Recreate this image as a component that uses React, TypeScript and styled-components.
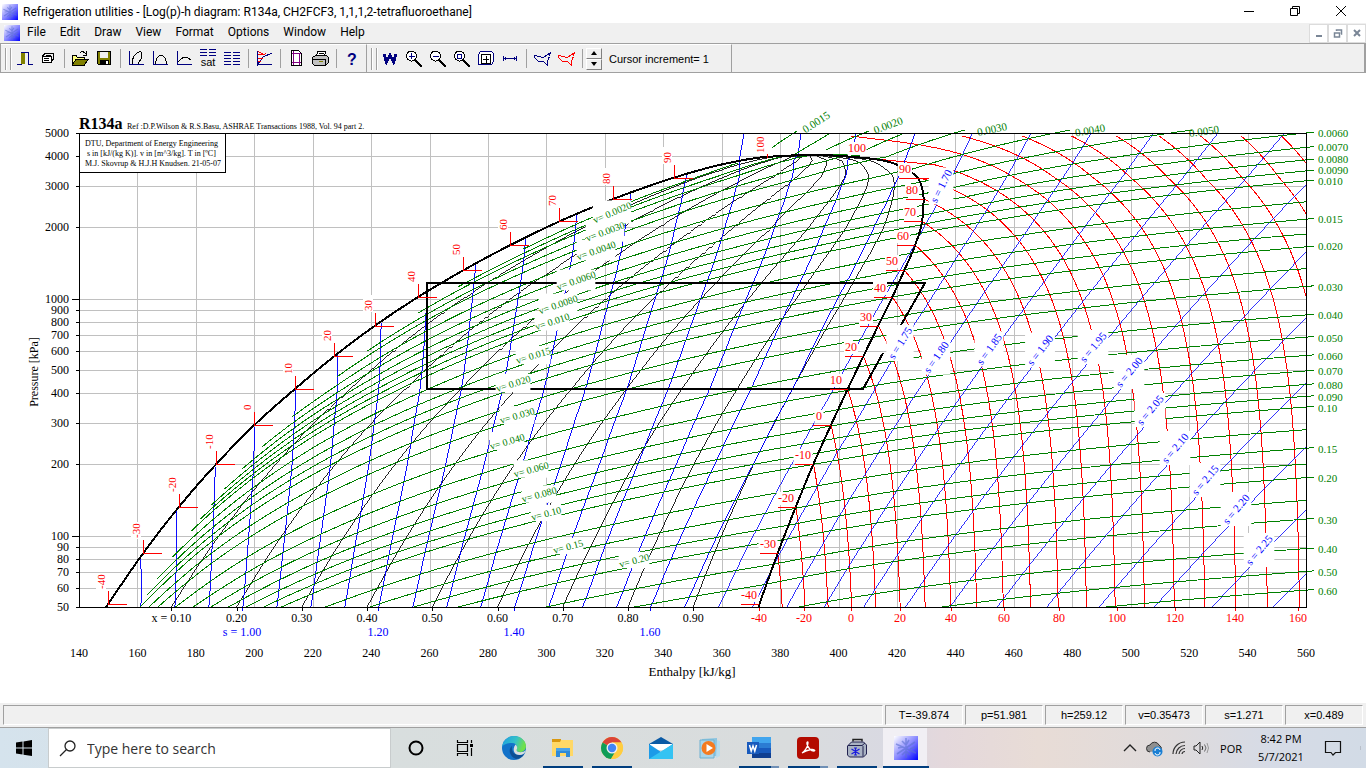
import React from "react";
import styled, { createGlobalStyle } from "styled-components";

/* ------------------------------------------------------------------ */
/* Refrigerant properties                                              */
/* ------------------------------------------------------------------ */

// T [C], p [kPa], h', h'' [kJ/kg], s' [kJ/(kg K)], v', v'' [m3/kg]
const SATURATION = [
  [-42, 46.3, 147.5, 371.7, 0.791, 0.000702, 0.4],
  [-40, 51.3, 149.9, 372.9, 0.8015, 0.000705, 0.361],
  [-30, 84.4, 162.0, 379.2, 0.8535, 0.00072, 0.226],
  [-20, 132.7, 174.3, 385.4, 0.903, 0.000736, 0.1474],
  [-10, 200.6, 187.0, 391.4, 0.9515, 0.000753, 0.0996],
  [0, 292.8, 200.0, 397.4, 1.0, 0.000772, 0.0693],
  [10, 414.6, 213.8, 403.1, 1.0485, 0.000793, 0.04944],
  [20, 571.7, 227.4, 408.5, 1.0962, 0.000817, 0.036],
  [30, 770.2, 241.4, 413.6, 1.1435, 0.000842, 0.02664],
  [40, 1016.6, 256.1, 418.4, 1.1905, 0.000872, 0.01997],
  [50, 1317.9, 271.6, 422.5, 1.2375, 0.000908, 0.01509],
  [60, 1681.8, 287.6, 426.2, 1.2848, 0.00095, 0.01144],
  [70, 2116.8, 304.4, 428.6, 1.3332, 0.001004, 0.00865],
  [80, 2633.2, 322.9, 429.1, 1.3836, 0.001077, 0.00644],
  [85, 2926, 333.0, 428.6, 1.411, 0.00113, 0.0055],
  [90, 3244.2, 343.8, 427.0, 1.439, 0.001194, 0.00461],
  [95, 3591, 356.3, 421.7, 1.473, 0.00131, 0.0038],
  [98, 3815, 366.0, 416.0, 1.5, 0.00143, 0.00322],
  [100, 3972.4, 375.5, 404.6, 1.523, 0.00156, 0.00265],
  [101.06, 4059, 392.0, 392.0, 1.565, 0.00195, 0.00195],
];

// Shape preserving cubic interpolation
function spline(xs: number[], ys: number[]) {
  const n = xs.length;
  const d: number[] = [];
  for (let i = 0; i < n - 1; i++) d.push((ys[i + 1] - ys[i]) / (xs[i + 1] - xs[i]));
  const m: number[] = [d[0]];
  for (let i = 1; i < n - 1; i++)
    m.push(d[i - 1] * d[i] <= 0 ? 0 : (2 * d[i - 1] * d[i]) / (d[i - 1] + d[i]));
  m.push(d[n - 2]);
  return (x: number) => {
    let i = 0;
    while (i < n - 2 && x > xs[i + 1]) i++;
    const w = xs[i + 1] - xs[i];
    const t = (x - xs[i]) / w;
    const t2 = t * t;
    const t3 = t2 * t;
    return (
      (2 * t3 - 3 * t2 + 1) * ys[i] +
      (t3 - 2 * t2 + t) * w * m[i] +
      (3 * t2 - 2 * t3) * ys[i + 1] +
      (t3 - t2) * w * m[i + 1]
    );
  };
}

const col = (i: number) => SATURATION.map((r) => r[i]);
const lnP = col(1).map(Math.log);
const byP = (i: number) => {
  const f = spline(lnP, col(i));
  return (p: number) => f(Math.log(p));
};
const tSat = byP(0);
const hf = byP(2);
const hg = byP(3);
const sf = byP(4);
const vf = byP(5);
const lnVg = spline(lnP, col(6).map(Math.log));
const vg = (p: number) => Math.exp(lnVg(Math.log(p)));
const sg = (p: number) => sf(p) + (hg(p) - hf(p)) / (tSat(p) + 273.15);
const lnPs = spline(col(0), lnP);
const pSat = (t: number) => Math.exp(lnPs(t));

const R = 8.314 / 102.03;
const TC = 374.21;
const PC = 4059;
const KAPPA = 0.37464 + 1.54226 * 0.3268 - 0.26992 * 0.3268 * 0.3268;
const B0 = (0.0778 * R * TC) / PC;
const A0 = (0.45724 * R * R * TC * TC) / PC;
const S8 = 2 * Math.SQRT2;

// Peng-Robinson equation of state
function gas(t: number, p: number) {
  const T = t + 273.15;
  const q = 1 + KAPPA * (1 - Math.sqrt(T / TC));
  const a = A0 * q * q;
  const da = (-A0 * q * KAPPA) / Math.sqrt(T * TC);
  const A = (a * p) / (R * R * T * T);
  const B = (B0 * p) / (R * T);
  const c2 = B - 1;
  const c1 = A - 3 * B * B - 2 * B;
  const c0 = -(A * B - B * B - B * B * B);
  const Q = (c2 * c2 - 3 * c1) / 9;
  const U = (2 * c2 * c2 * c2 - 9 * c2 * c1 + 27 * c0) / 54;
  let z: number;
  if (Q > 0 && U * U < Q * Q * Q) {
    const th = Math.acos(U / Math.sqrt(Q * Q * Q));
    z = -2 * Math.sqrt(Q) * Math.cos((th + 2 * Math.PI) / 3) - c2 / 3;
  } else {
    const e = -Math.sign(U) * Math.cbrt(Math.abs(U) + Math.sqrt(U * U - Q * Q * Q));
    z = e + (e === 0 ? 0 : Q / e) - c2 / 3;
  }
  const lg = Math.log((z + 2.41421 * B) / (z - 0.41421 * B));
  return {
    h: 0.796 * t + 0.000975 * t * t + R * T * (z - 1) + ((T * da - a) / (S8 * B0)) * lg,
    s:
      (0.796 - 0.00195 * 273.15) * Math.log(T) +
      0.00195 * T -
      R * Math.log(p) +
      R * Math.log(z - B) +
      (da / (S8 * B0)) * lg,
    v: (z * R * T) / p,
  };
}

const H0 = 456.6 - gas(60, 50).h;
const S0 = 2.1 - gas(75.8, 50).s;

function vapour(t: number, p: number) {
  const g = gas(t, p);
  const tr = Math.min(t, 90);
  const ps = pSat(tr);
  const e = gas(tr, ps);
  const k = Math.min(1, p / ps);
  return {
    h: g.h + H0 + (hg(ps) - e.h - H0) * k,
    s: g.s + S0 + (sg(ps) - e.s - S0) * k,
    v: g.v * (1 + (vg(ps) / e.v - 1) * k),
  };
}

function solve(key: "s" | "v", target: number, p: number) {
  let lo = p < PC ? tSat(p) : 101;
  let hi = 280;
  for (let i = 0; i < 40; i++) {
    const mid = (lo + hi) / 2;
    if (vapour(mid, p)[key] < target) lo = mid;
    else hi = mid;
  }
  return vapour((lo + hi) / 2, p).h;
}

/* ------------------------------------------------------------------ */
/* Chart geometry                                                      */
/* ------------------------------------------------------------------ */

type Pt = [number, number];
const X = (h: number) => 79 + (h - 140) * 2.9214;
const Y = (p: number) => 607 - 237 * Math.log10(p / 50);
const P = (y: number) => 50 * Math.pow(10, (607 - y) / 237);
const pt = (h: number, p: number): Pt => [X(h), Y(p)];
const path = (pts: Pt[]) =>
  pts.map(([x, y], i) => `${i ? "L" : "M"}${x.toFixed(1)} ${y.toFixed(1)}`).join("");

const PRESSURES: number[] = [];
for (let y = 607; y > 155; y -= 2) PRESSURES.push(P(y));
PRESSURES.push(4030, 4055);
const HIGH: number[] = [];
for (let y = 153; y >= 129; y -= 3) HIGH.push(P(y));

const dome = path([
  ...PRESSURES.map((p) => pt(hf(p), p)),
  pt(392, 4059),
  ...PRESSURES.slice().reverse().map((p) => pt(hg(p), p)),
]);

const qualityLine = (x: number) =>
  path([...PRESSURES.map((p) => pt(hf(p) + x * (hg(p) - hf(p)), p)), pt(392, 4059)]);

const TOP_S: Record<string, number> = { "1.5": 744, "1.55": 801, "1.6": 856 };
function isentrope(s: number) {
  const pts: Pt[] = [];
  for (const p of PRESSURES) {
    if (s < sf(p)) break;
    const g = sg(p);
    if (s <= g) pts.push(pt(hf(p) + ((s - sf(p)) / (g - sf(p))) * (hg(p) - hf(p)), p));
    else pts.push([X(solve("s", s, p)), Y(p)]);
  }
  const top = TOP_S[String(s)];
  if (top) pts.push([top, 133]);
  else if (s > 1.62) for (const p of HIGH) pts.push([X(solve("s", s, p)), Y(p)]);
  return path(pts);
}

const TOP_V: Record<string, Pt[]> = {
  "0.0015": [[772, 148], [780, 142], [797, 131]],
  "0.00175": [[795, 154], [829, 134]],
  "0.002": [[826, 150], [847, 140], [869, 131]],
};
function isochore(v: number) {
  const pts: Pt[] = [];
  for (const p of PRESSURES) {
    if (v <= vg(p)) {
      const x = (v - vf(p)) / (vg(p) - vf(p));
      if (x >= 0.05) pts.push(pt(hf(p) + x * (hg(p) - hf(p)), p));
    } else pts.push([X(solve("v", v, p)), Y(p)]);
  }
  const top = TOP_V[String(v)];
  if (top) return path(pts) + path(top);
  for (const p of HIGH) pts.push([X(solve("v", v, p)), Y(p)]);
  return path(pts.filter(([x]) => x < 1500));
}

function isotherm(t: number) {
  const pts: Pt[] = [];
  const yTop = t < 101 ? Y(pSat(t)) : 133;
  if (t < 101) pts.push(pt(hg(pSat(t)), pSat(t)));
  for (let y = yTop + (t === 100 ? 8 : 3); y < 607; y += 3) pts.push([X(vapour(t, P(y)).h), y]);
  pts.push([X(vapour(t, 50).h), 607]);
  return path(pts);
}

const range = (a: number, b: number, step: number) => {
  const out: number[] = [];
  for (let i = 0; a + i * step <= b + step / 100; i++) out.push(Number((a + i * step).toFixed(4)));
  return out;
};

const VOLUMES = [0.001, 0.01, 0.1]
  .flatMap((d) => [1.5, 1.75, 2, 2.5, 3, 4, 5, 6, 7, 8, 9, 10, 12.5].map((m) => Number((m * d).toFixed(6))))
  .filter((v) => v <= 0.6);
// intermediate curves stop at the frame, labelled ones run a little past it
const isMinor = (v: number) => /(125|175|25)$/.test(String(v));

const GRID_P = [50, 60, 70, 80, 90, 100, 200, 300, 400, 500, 600, 700, 800, 900, 1000, 2000, 3000, 4000, 5000];

const RIGHT_V: [string, number][] = [
  ["0.0060", 133], ["0.0070", 147], ["0.0080", 159], ["0.0090", 170], ["0.010", 181],
  ["0.015", 219], ["0.020", 246], ["0.030", 287], ["0.040", 315], ["0.050", 338],
  ["0.060", 356], ["0.070", 371], ["0.080", 385], ["0.090", 397], ["0.10", 408],
  ["0.15", 449], ["0.20", 478], ["0.30", 520], ["0.40", 549], ["0.50", 572], ["0.60", 591],
];

type Tag = [string, number, number, number];
const TOP_TAGS: Tag[] = [
  ["0.0015", 816, 122, -33], ["0.0020", 888, 125, -20], ["0.0030", 992, 129, -12],
  ["0.0040", 1090, 130, -10], ["0.0050", 1204, 131, -8],
];
const V_TAGS: Tag[] = [
  ["v= 0.0020", 612, 212, -23], ["v= 0.0030", 605, 231, -20], ["v= 0.0040", 596, 250, -19],
  ["v= 0.0060", 576, 280, -19], ["v= 0.0080", 558, 304, -19], ["v= 0.010", 552, 321, -18],
  ["v= 0.015", 533, 355, -17], ["v= 0.020", 513, 383, -17], ["v= 0.030", 517, 415, -16],
  ["v= 0.040", 507, 441, -16], ["v= 0.060", 531, 469, -15], ["v= 0.080", 539, 494, -15],
  ["v= 0.10", 546, 513, -15], ["v= 0.15", 568, 546, -15], ["v= 0.20", 634, 560, -15],
];
const S_TAGS: Tag[] = [
  ["s = 1.70", 941, 186, -63], ["s = 1.75", 900, 343, -58], ["s = 1.80", 936, 357, -55],
  ["s = 1.85", 989, 349, -54], ["s = 1.90", 1040, 350, -52], ["s = 1.95", 1093, 347, -50],
  ["s = 2.00", 1129, 372, -50], ["s = 2.05", 1150, 410, -50], ["s = 2.10", 1175, 448, -50],
  ["s = 2.15", 1205, 480, -50], ["s = 2.20", 1236, 509, -50], ["s = 2.25", 1259, 550, -50],
];
const BOTTOM_T: [number, number][] = [
  [-40, 759], [-20, 804], [0, 851], [20, 900], [40, 951], [60, 1004],
  [80, 1059], [100, 1117], [120, 1175], [140, 1235], [160, 1298],
];
const BOTTOM_S: [string, number][] = [["s = 1.00", 242], ["1.20", 378], ["1.40", 514], ["1.60", 650]];

const GREEN = "#008000";
const RED = "#ff0000";
const BLUE = "#0000ff";

const Canvas = styled.main`
  flex: 1 0 auto;
  display: flex;
  background: #fff;
`;
const ChartSvg = styled.svg`
  display: block;
  width: 100%;
  height: auto;
  font-family: "Liberation Serif", "Times New Roman", serif;
`;
const Lines = styled.g<{ $color: string; $w?: number }>`
  fill: none;
  stroke: ${(p) => p.$color};
  stroke-width: ${(p) => p.$w ?? 1}px;
  shape-rendering: crispEdges;
`;
const Label = styled.text<{ $color?: string; $size?: number; $bold?: boolean }>`
  fill: ${(p) => p.$color ?? "#000"};
  font-size: ${(p) => p.$size ?? 12}px;
  font-weight: ${(p) => (p.$bold ? 700 : 400)};
`;

function Tagged({ tags, color, size }: { tags: Tag[]; color: string; size: number }) {
  return (
    <>
      {tags.map(([text, x, y, angle]) => {
        const a = (Math.abs(angle) * Math.PI) / 180;
        const len = text.length * size * 0.42;
        const w = len * Math.cos(a) + 9 * Math.sin(a);
        const h = len * Math.sin(a) + 9 * Math.cos(a);
        return <rect key={text} x={x - w / 2} y={y - h / 2} width={w} height={h} fill="#fff" />;
      })}
      {tags.map(([text, x, y, angle]) => (
        <Label key={text} $size={size} $color={color} textAnchor="middle" transform={`translate(${x} ${y}) rotate(${angle})`} y={4}>
          {text}
        </Label>
      ))}
    </>
  );
}

function Diagram() {
  return (
    <ChartSvg viewBox="0 73 1366 630" role="img" aria-label="Log(p)-h diagram of R134a">
      <defs>
        <clipPath id="plot"><rect x="79" y="133" width="1228" height="475" /></clipPath>
        <clipPath id="plotWide"><rect x="79" y="130" width="1235" height="478" /></clipPath>
      </defs>

      <Lines $color="#c0c0c0">
        {GRID_P.map((p) => <path key={p} d={`M79 ${Math.round(Y(p)) + 0.5}H1306`} />)}
        {range(160, 540, 20).map((h) => <path key={h} d={`M${Math.round(X(h)) + 0.5} 133V607`} />)}
      </Lines>

      <Lines $color={RED} clipPath="url(#plot)">
        {range(-30, 190, 10).map((t) => <path key={t} d={isotherm(t)} />)}
      </Lines>
      <Lines $color="#000" $w={0.85} clipPath="url(#plot)">
        {range(0.1, 0.9, 0.1).map((x) => <path key={x} d={qualityLine(x)} />)}
      </Lines>
      <Lines $color={BLUE} $w={0.95} clipPath="url(#plot)">
        {range(0.8, 1.65, 0.05).map((s) => <path key={s} d={isentrope(s)} />)}
      </Lines>
      <Lines $color={BLUE} $w={0.8} clipPath="url(#plot)">
        {range(1.7, 2.35, 0.05).map((s) => <path key={s} d={isentrope(s)} />)}
      </Lines>
      <Lines $color={GREEN}>
        {VOLUMES.map((v) => (
          <path key={v} d={isochore(v)} clipPath={isMinor(v) ? "url(#plot)" : "url(#plotWide)"} />
        ))}
      </Lines>

      <Lines $color="#000" $w={2} clipPath="url(#plot)"><path d={dome} /></Lines>
      <Lines $color="#000" $w={2}>
        <path d="M901 325L925 283H427V389H863L883 353" />
      </Lines>

      <Tagged tags={V_TAGS} color={GREEN} size={10} />
      <Tagged tags={S_TAGS} color={BLUE} size={11} />

      {/* saturated liquid temperatures */}
      {range(-40, 100, 10).map((t) => {
        const p = pSat(t);
        const x = Math.round(X(hf(p)));
        const y = Math.round(Y(p));
        const base = t === 100 ? y - 4 : y - 15;
        return (
          <g key={t}>
            <rect x={x - 12} y={base - 16} width="10" height="17" fill="#fff" />
            <Lines $color={RED}><path d={`M${x + 0.5} ${t === 100 ? y - 3 : y - 13}V${y + 0.5}H${x + (t === 100 ? 1 : 19)}`} /></Lines>
            <Label $color={RED} $size={11} transform={`translate(${x - 3} ${base}) rotate(-90)`}>{t}</Label>
          </g>
        );
      })}

      {/* saturated vapour temperatures */}
      {range(-40, 100, 10).map((t) => {
        const p = pSat(t);
        const x = Math.round(X(hg(p)));
        const y = Math.round(Y(p));
        const cx = t === 100 ? 857 : t < 0 ? x - 10 : x - 12;
        const w = String(t).length * 5 + 4;
        return (
          <g key={t}>
            <rect x={cx - w / 2} y={y - 15} width={w} height="13" fill="#fff" />
            {t < 100 && <Lines $color={RED}><path d={`M${x - 18} ${y + 0.5}H${t === 90 ? x + 12 : x}`} /></Lines>}
            <Label $color={RED} x={cx} y={y - 5} textAnchor="middle">{t}</Label>
          </g>
        );
      })}

      {TOP_TAGS.map(([text, x, y, a]) => (
        <Label key={text} $size={11} $color={GREEN} textAnchor="middle" transform={`translate(${x} ${y}) rotate(${a})`} y={4}>{text}</Label>
      ))}
      {RIGHT_V.map(([text, y]) => (
        <Label key={text} $size={11} $color={GREEN} x="1318" y={y + 4}>{text}</Label>
      ))}

      {/* frame and ticks */}
      <Lines $color="#000">
        <path d="M79.5 133.5H1306.5V607.5H79.5Z" />
        {GRID_P.map((p) => <path key={p} d={`M${p === 100 || p === 1000 ? 72 : 76} ${Math.round(Y(p)) + 0.5}H79`} />)}
        {range(0.1, 0.9, 0.1).map((x) => (
          <path key={x} d={`M${Math.round(X(hf(50) + x * (hg(50) - hf(50)))) + 0.5} 607V611`} />
        ))}
        <rect x="79.5" y="133.5" width="146" height="39" fill="#fff" />
      </Lines>
      <Lines $color={BLUE}>
        {BOTTOM_S.map(([t, x]) => <path key={t} d={`M${x + 0.5} 608V611`} />)}
      </Lines>
      <Lines $color={RED}>
        {BOTTOM_T.map(([t, x]) => <path key={t} d={`M${x + 0.5} 608V611`} />)}
      </Lines>

      <Label $bold $size={16} x="79" y="129">R134a</Label>
      <Label $size={8} x="127" y="129">Ref :D.P.Wilson &amp; R.S.Basu, ASHRAE Transactions 1988, Vol. 94 part 2.</Label>
      <Label $size={8} x="85" y="146">DTU, Department of Energy Engineering</Label>
      <Label $size={8} x="87" y="156">s in [kJ/(kg K)]. v in [m^3/kg]. T in [ºC]</Label>
      <Label $size={8} x="85" y="166">M.J. Skovrup &amp; H.J.H Knudsen. 21-05-07</Label>

      {GRID_P.map((p) => <Label key={p} x="69" y={Math.round(Y(p)) + 4} textAnchor="end">{p}</Label>)}
      {range(140, 560, 20).map((h) => <Label key={h} x={X(h)} y="657" textAnchor="middle">{h}</Label>)}
      {range(0.1, 0.9, 0.1).map((q) => (
        <Label key={q} x={X(hf(50) + q * (hg(50) - hf(50)))} y="622" textAnchor="middle">
          {(q === 0.1 ? "x = " : "") + q.toFixed(2)}
        </Label>
      ))}
      {BOTTOM_S.map(([t, x]) => <Label key={t} $color={BLUE} x={x} y="636" textAnchor="middle">{t}</Label>)}
      {BOTTOM_T.map(([t, x]) => <Label key={t} $color={RED} x={x} y="622" textAnchor="middle">{t}</Label>)}
      <Label $size={13} x="692" y="676" textAnchor="middle">Enthalpy [kJ/kg]</Label>
      <Label transform="translate(38 372) rotate(-90)" textAnchor="middle">Pressure [kPa]</Label>
    </ChartSvg>
  );
}

/* ------------------------------------------------------------------ */
/* Window chrome                                                       */
/* ------------------------------------------------------------------ */

const Global = createGlobalStyle`
  body { margin: 0; background: #fff; }
  * { box-sizing: border-box; }
  button { border: 0; padding: 0; background: none; font: inherit; color: inherit; }
`;
const Page = styled.div`
  min-height: 100vh;
  display: flex;
  flex-direction: column;
  font-family: "Open Sans", "Noto Sans", sans-serif;
  font-size: 12px;
  color: #000;
`;
const TitleBar = styled.header`
  height: 23px;
  padding: 0 2px;
  display: flex;
  align-items: center;
  background: #fff;
`;
const Title = styled.h1`
  flex: 1;
  margin: 0 0 0 5px;
  font-family: Roboto, sans-serif;
  font-size: 12px;
  font-weight: 400;
  white-space: nowrap;
`;
const WinButton = styled.button`
  width: 46px;
  height: 23px;
  padding-bottom: 2px;
  display: grid;
  place-items: center;
`;
const MenuBar = styled.nav`
  height: 20px;
  padding-left: 4px;
  display: flex;
  align-items: center;
  background: #f0f0f0;
`;
const MenuItem = styled.button`
  padding: 0 7px 2px;
  font-family: Roboto, sans-serif;
  line-height: 18px;
`;
const Spacer = styled.div`
  flex: 1;
`;
const MdiButton = styled.button`
  width: 19px;
  height: 19px;
  display: grid;
  place-items: center;
  background: #fff;
  border: 1px solid #dcdcdc;
`;
const ToolBar = styled.div`
  height: 30px;
  display: flex;
  align-items: stretch;
  background: #f0f0f0;
  border: 1px solid #a0a0a0;
  border-right-width: 2px;
`;
const ToolGroup = styled.div`
  display: flex;
  align-items: center;
  border-top: 1px solid #fff;
  border-right: 1px solid #a0a0a0;
  padding: 0 2px 0 4px;
`;
const Grip = styled.span`
  width: 6px;
  height: 22px;
  margin-right: 1px;
  border: solid #a0a0a0;
  border-width: 0 1px;
  box-shadow: inset 1px 0 #fff, 1px 0 #fff;
  flex: none;
`;
const Divider = styled.span`
  width: 1px;
  height: 19px;
  margin: 0 3px 0 4px;
  background: #a0a0a0;
  flex: none;
`;
const Tool = styled.button`
  width: 24px;
  height: 24px;
  display: block;
  flex: none;
  svg { display: block; shape-rendering: crispEdges; }
`;
const Spin = styled.div`
  display: flex;
  flex-direction: column;
  width: 16px;
`;
const SpinButton = styled.button`
  width: 16px;
  height: 11px;
  display: grid;
  place-items: center;
  background: #f0f0f0;
  border: 1px solid;
  border-color: #fff #808080 #808080 #fff;
`;
const ToolText = styled.span`
  font-family: "Liberation Sans", Arial, sans-serif;
  font-size: 11px;
  white-space: nowrap;
  padding: 0 20px 0 7px;
`;
const StatusBar = styled.footer`
  height: 25px;
  padding: 2px 3px;
  display: flex;
  gap: 2px;
  background: #f0f0f0;
  border-bottom: 1px solid #a0a0a0;
  font-family: "Liberation Sans", Arial, sans-serif;
  font-size: 11px;
`;
const StatusCell = styled.div<{ $fill?: boolean }>`
  flex: ${(p) => (p.$fill ? "1" : "0 0 78px")};
  height: 20px;
  border: 1px solid;
  border-color: #a0a0a0 #fff #fff #a0a0a0;
  line-height: 19px;
  text-align: center;
`;
const TaskBar = styled.div`
  height: 40px;
  display: flex;
  background: linear-gradient(90deg, #d5e3ed 0, #d8dede 28%, #d9dcdd 58%, #d9d9e2 65%, #e4d8dc 69%, #e8dcd6 76%, #dfdbdc 86%, #d6dbe6 93%, #d2dbe6 100%);
`;
const Task = styled.button<{ $w?: number }>`
  width: ${(p) => p.$w ?? 49}px;
  height: 40px;
  display: grid;
  place-items: center;
  flex: none;
`;
const AppTask = styled(Task)<{ $run?: boolean; $stack?: boolean; $active?: boolean }>`
  background: ${(p) => (p.$active ? "linear-gradient(#f1eff4, #f1eff4) 2px 0 / 44px 100% no-repeat" : "none")};
  position: relative;
  &::after {
    content: "";
    display: ${(p) => (p.$run || p.$active ? "block" : "none")};
    position: absolute;
    bottom: 0;
    left: ${(p) => (p.$active ? 2 : 5)}px;
    width: ${(p) => (p.$active ? 46 : 40)}px;
    height: 2px;
    background: ${(p) =>
      p.$stack ? "linear-gradient(90deg, #003e7e 32px, #6f8fb5 32px)" : "#003e7e"};
  }
`;
const SearchBox = styled.label`
  width: 343px;
  height: 40px;
  padding-left: 10px;
  display: flex;
  align-items: center;
  gap: 11px;
  background: #fff;
  border: 1px solid #c8cccd;
`;
const SearchInput = styled.input`
  flex: 1;
  min-width: 0;
  border: 0;
  outline: 0;
  padding: 0;
  background: none;
  font-family: "Open Sans", "Noto Sans", sans-serif;
  font-size: 14px;
  &::placeholder { color: #333; opacity: 1; }
`;
const Lang = styled.button`
  width: 38px;
  font-size: 11px;
`;
const Clock = styled.button`
  width: 62px;
  font-size: 11px;
  line-height: 18px;
  text-align: center;
  white-space: pre-line;
`;

/* ------------------------------------------------------------------ */
/* Icons                                                               */
/* ------------------------------------------------------------------ */

function AppIcon({ size }: { size: number }) {
  return (
    <svg width={size} height={size} viewBox="0 0 24 24" aria-hidden>
      <defs>
        <linearGradient id={`snow${size}`} x1="0" y1="0" x2="1" y2="1">
          <stop offset="0" stopColor="#fff" />
          <stop offset=".5" stopColor="#8a8aff" />
          <stop offset="1" stopColor="#0000ff" />
        </linearGradient>
      </defs>
      <rect width="24" height="24" fill={`url(#snow${size})`} />
      <path d="M12 2V22M2 8L22 17M3 18L21 6M8 5l4 4 3-5M8 19l4-4 4 4M4 12l5-1M16 13l5-2" stroke="#5c6fd0" strokeWidth="1.6" fill="none" opacity=".6" />
    </svg>
  );
}

const N = "#000080";
const magnifier = (
  <>
    <circle cx="9.5" cy="10" r="5" fill="#fff" stroke="#000" />
    <path d="M13 14L20 21" stroke="#000" strokeWidth="2.5" fill="none" />
  </>
);
const axes = <path d="M5.5 5V18.5H20" stroke={N} fill="none" />;
const cycleShape = "M4.5 9.5L13.5 11.5L20.5 6.500L19.500 10.500L17.500 15V19.500L13.500 15.500H8.500L4.500 11.500z";

const TOOL_ICONS: Record<string, React.ReactNode> = {
  Exit: (
    <>
      <path d="M9 6h4v12H9z" fill="#808000" />
      <path d="M5 18.5H9.5M9 6.5H16.5V18.5H21" stroke={N} strokeWidth="1.5" fill="none" />
    </>
  ),
  Properties: (
    <>
      <path d="M6.5 10.5h9v6h-9z" fill="#fff" stroke="#000" />
      <path d="M6 10.5L9 7.5H17.5V13L16 15M8 12.5h5M8 14.5h5M10 9.500h5" fill="none" stroke="#000" />
    </>
  ),
  Open: (
    <>
      <path d="M4 19V9h4l1 2h7v3" fill="#ffff80" stroke="#000" />
      <path d="M4 19L8 13.5H20L16 19.5H4z" fill="#808000" stroke="#000" />
      <path d="M12 7q3-3 6 1M18.5 5v4h-4" fill="none" stroke="#000" />
    </>
  ),
  Save: (
    <>
      <path d="M5.5 5.5h13v13h-12l-1-1z" fill="#808000" stroke="#000" />
      <rect x="8" y="6" width="8" height="6" fill="#f0f0f0" />
      <path d="M8 14h9v5H8z" fill="#000" />
      <path d="M14 15h2v3h-2z" fill="#fff" />
    </>
  ),
  "Log p-h": <>{axes}<path d="M8 18V15L10 10L13 7Q17 4 18 8L17 13L14 18" stroke="#000" fill="none" /></>,
  "T-s": <>{axes}<path d="M7 18L9 12Q13 6 17 12L19 18" stroke="#000" fill="none" /></>,
  "h-s": <>{axes}<path d="M6 16L9 13Q13 9 19 14" stroke="#000" fill="none" /></>,
  "Saturation table": (
    <>
      <path d="M4 3.5h7M13 3.5h7M4 6.5h7M13 6.5h7M4 9.5h7M13 9.5h7" stroke={N} fill="none" />
      <text x="12" y="20" textAnchor="middle" fontSize="11" fontFamily="Liberation Sans">sat</text>
    </>
  ),
  Table: <path d="M4 6.5h7M13 6.5h7M4 9.5h7M13 9.5h7M4 12.5h7M13 12.5h7M4 15.5h7M13 15.5h7M4 18.5h7M13 18.5h7" stroke={N} fill="none" />,
  Curves: (
    <>
      <path d="M5.5 5V20M5 18.5H20M6 18L11 11L20 7" stroke={N} fill="none" />
      <path d="M6 5.5L13 9M6 8.5h6l2-1M6 12h5M6 15h3" stroke={RED} fill="none" />
    </>
  ),
  "Page setup": (
    <>
      <path d="M7.5 4.5h7l3 3v12h-10z" fill="#fff" stroke="#000" />
      <path d="M9.5 5V19M15.5 7V19M8 7.5h9M8 16.5h9" stroke="#800080" fill="none" />
    </>
  ),
  Print: (
    <>
      <path d="M8 11L10 5h8l-2 6" fill="#fff" stroke="#000" />
      <path d="M4.5 11.5l3-2h11l2 2v5l-3 3h-11l-2-2z" fill="#c0c0c0" stroke="#000" />
      <path d="M5 13.5h12v5M11 7h5M10 9h5" stroke="#000" fill="none" />
      <path d="M11 15.5h4" stroke="#808000" />
    </>
  ),
  Help: <text x="12" y="19" textAnchor="middle" fontSize="16" fontWeight="700" fill={N} fontFamily="Liberation Sans">?</text>,
  "Whole window": <path d="M6 8L8.5 16L12 9L15.5 16L18 8" stroke={N} strokeWidth="3" fill="none" />,
  "Zoom in": <>{magnifier}<path d="M7 10.5h6M9.5 7V13" stroke={N} /></>,
  "Zoom out": <>{magnifier}<path d="M7 10.5h6" stroke={N} /></>,
  "Zoom window": <>{magnifier}<path d="M7.5 8.5h4v4h-4z" stroke={N} fill="none" /></>,
  "Copy area": (
    <>
      <path d="M7 18.5H4.5V8.5L6.5 5.5H17.5L19.5 7.5V15.5L17.5 18.5z" stroke={N} fill="#fff" />
      <path d="M7.5 8.5h9v9h-9zM12 10v7M9 13.5h6" stroke="#000" fill="none" />
    </>
  ),
  Measure: <path d="M5.5 10V15M18.5 10V15M6 12.5H18M7.500 11v3M16.500 11v3" stroke={N} fill="none" />,
  "Draw cycle": <path d={cycleShape} stroke={N} fill="none" />,
  "Delete cycle": <path d={cycleShape} stroke={RED} fill="none" />,
};

function ToolIcon({ name }: { name: string }) {
  return (
    <Tool aria-label={name} title={name}>
      <svg width="24" height="24" viewBox="0 1 24 24">{TOOL_ICONS[name]}</svg>
    </Tool>
  );
}

const Svg = ({ s = 24, children }: { s?: number; children: React.ReactNode }) => (
  <svg width={s} height={s} viewBox={`0 0 ${s} ${s}`} fill="none" aria-hidden>{children}</svg>
);

const TASKS: { name: string; run?: boolean; stack?: boolean; icon: React.ReactNode }[] = [
  {
    name: "Microsoft Edge",
    icon: (
      <>
        <defs>
          <linearGradient id="edgeA" x1="0" y1="0" x2="1" y2=".3"><stop stopColor="#1b9de2" /><stop offset=".6" stopColor="#35c1c8" /><stop offset="1" stopColor="#6fe04a" /></linearGradient>
        </defs>
        <circle cx="12" cy="12" r="12" fill="#1272c9" />
        <path d="M0 11C1 4 6 0 12 0c7 0 12 5 12 10 0 4-3 6-6 6-2 0-4-1-4-2 1-1 1-2 1-3 0-2-2-4-5-4C5 7 1 9 0 11z" fill="url(#edgeA)" />
        <path d="M10 10c-4 3-3 10 4 13 4 0 7-3 8-5-2 1-4 1-5 1-5 0-8-4-7-9z" fill="#0d4f94" />
        <path d="M13.5 8.5c2 1.5 2 4 1 5.5 0 1.5 2 2.2 4 2.2 2 0 4-.8 5.500-2-1 3-3 4.800-6.500 4.800-5 0-8-5-4-10.500z" fill="#d9dedf" />
      </>
    ),
  },
  {
    name: "File Explorer", run: true,
    icon: (
      <>
        <path d="M1 3h9v5H1z" fill="#d9980f" />
        <path d="M1 6h8l1-2h12v16H1z" fill="#ffd866" />
        <path d="M5 12h14v9h-4v-4H9v4H5z" fill="#2f8ad8" />
        <path d="M5 12h14v3H5z" fill="#4aa3e8" />
      </>
    ),
  },
  {
    name: "Google Chrome", run: true,
    icon: (
      <>
        <circle cx="12" cy="12" r="11" fill="#ffcd40" />
        <path d="M12 12L2.5 6.500A11 11 0 0 1 21.5 6.500H12z" fill="#db4437" />
        <path d="M12 12L2.5 6.500A11 11 0 0 0 11 23l5-8.500z" fill="#0f9d58" />
        <path d="M12 6.500H21.5A11 11 0 0 1 11 23L16.5 14z" fill="#ffcd40" />
        <circle cx="12" cy="12" r="5.500" fill="#f1f1f1" />
        <circle cx="12" cy="12" r="4.200" fill="#4285f4" />
      </>
    ),
  },
  {
    name: "Mail",
    icon: (
      <>
        <path d="M0 8L12 1L24 8V13H0z" fill="#0a5aa5" />
        <path d="M1 8h22v6H1z" fill="#fff" />
        <path d="M0 8L12 16L24 8V23H0z" fill="#1c9be8" />
        <path d="M0 23L24 8V23z" fill="#35c3f3" />
      </>
    ),
  },
  {
    name: "Movies",
    icon: (
      <>
        <path d="M4 3l15-1v18L4 21z" fill="#8cc5e0" />
        <path d="M2 4h14v18H2z" fill="#a9d5ea" stroke="#6fb0d0" />
        <path d="M19 4l3 1v15l-4 2" fill="#b9dcec" />
        <circle cx="10.5" cy="12" r="7" fill="#f47b20" />
        <path d="M8.5 8L15 12L8.5 16z" fill="#fff" />
      </>
    ),
  },
  {
    name: "Word", run: true, stack: true,
    icon: (
      <>
        <path d="M5 1h19v6H5z" fill="#41a5ee" />
        <path d="M5 7h19v5H5z" fill="#2b7cd3" />
        <path d="M5 12h19v5H5z" fill="#185abd" />
        <path d="M5 17h19v5H5z" fill="#103f91" />
        <rect x="0" y="6" width="12" height="12" fill="#185abd" />
        <path d="M2.5 9l1.700 6L6 10l1.800 5L9.5 9" stroke="#fff" strokeWidth="1.5" />
      </>
    ),
  },
  {
    name: "Acrobat", run: true, stack: true,
    icon: (
      <>
        <rect x="1" y="1" width="22" height="22" rx="4" fill="#b30b00" />
        <path d="M6 17c2-1 6-6 6-10 0-2-1.500-1-1 1 1 4 4 7 7 7 2 0 0-2-3-1.500-4 .5-6 1.500-9 3.500z" stroke="#fff" strokeWidth="1.300" />
      </>
    ),
  },
  {
    name: "CoolPack", run: true,
    icon: (
      <>
        <path d="M8 5.500V3.500h9v2" stroke="#222" strokeWidth="1.500" />
        <path d="M2.500 10l4-4h12l3 3v9l-3 3h-14l-2-2z" fill="#a9b2c3" stroke="#222250" />
        <path d="M3 9.500h14l1 1v10M17 9.500l3-2.500" stroke="#222250" />
        <path d="M10.5 11.500v8M6.500 13l8 5M6.500 18l8-5M9 12h3M9 19h3" stroke="#1a1ae0" strokeWidth="1.200" />
      </>
    ),
  },
];

export default function App() {
  return (
    <Page>
      <Global />
      <TitleBar>
        <AppIcon size={16} />
        <Title>Refrigeration utilities - [Log(p)-h diagram: R134a, CH2FCF3, 1,1,1,2-tetrafluoroethane]</Title>
        <WinButton aria-label="Minimize"><Svg s={12}><path d="M1 6.5H11" stroke="#000" /></Svg></WinButton>
        <WinButton aria-label="Restore"><Svg s={12}><path d="M1.5 3.5h7v7h-7zM3.5 3V1.5h7v7H9" stroke="#000" /></Svg></WinButton>
        <WinButton aria-label="Close"><Svg s={12}><path d="M1 1L11 11M11 1L1 11" stroke="#000" /></Svg></WinButton>
      </TitleBar>
      <MenuBar>
        <AppIcon size={16} />
        {["File", "Edit", "Draw", "View", "Format", "Options", "Window", "Help"].map((m) => (
          <MenuItem key={m}>{m}</MenuItem>
        ))}
        <Spacer />
        <MdiButton aria-label="Minimize document"><Svg s={12}><path d="M3 9H9" stroke="#7a8696" strokeWidth="2" /></Svg></MdiButton>
        <MdiButton aria-label="Restore document"><Svg s={12}><path d="M2.5 6h5v4h-5zM4.5 4V3h5v4H9" stroke="#7a8696" strokeWidth="1.5" /></Svg></MdiButton>
        <MdiButton aria-label="Close document"><Svg s={12}><path d="M3 3L9 9M9 3L3 9" stroke="#7a8696" strokeWidth="2" /></Svg></MdiButton>
      </MenuBar>
      <ToolBar>
        <ToolGroup>
          <Grip />
          <ToolIcon name="Exit" />
          <ToolIcon name="Properties" />
          <Divider />
          <ToolIcon name="Open" />
          <ToolIcon name="Save" />
          <Divider />
          <ToolIcon name="Log p-h" />
          <ToolIcon name="T-s" />
          <ToolIcon name="h-s" />
          <ToolIcon name="Saturation table" />
          <ToolIcon name="Table" />
          <Divider />
          <ToolIcon name="Curves" />
          <Divider />
          <ToolIcon name="Page setup" />
          <ToolIcon name="Print" />
          <Divider />
          <ToolIcon name="Help" />
        </ToolGroup>
        <ToolGroup>
          <Grip />
          <ToolIcon name="Whole window" />
          <ToolIcon name="Zoom in" />
          <ToolIcon name="Zoom out" />
          <ToolIcon name="Zoom window" />
          <ToolIcon name="Copy area" />
          <ToolIcon name="Measure" />
          <Divider />
          <ToolIcon name="Draw cycle" />
          <ToolIcon name="Delete cycle" />
          <Divider />
          <Spin>
            <SpinButton aria-label="Increase increment"><Svg s={8}><path d="M1 6L4 2L7 6z" fill="#000" /></Svg></SpinButton>
            <SpinButton aria-label="Decrease increment"><Svg s={8}><path d="M1 2L4 6L7 2z" fill="#000" /></Svg></SpinButton>
          </Spin>
          <ToolText>Cursor increment= 1</ToolText>
        </ToolGroup>
      </ToolBar>
      <Canvas><Diagram /></Canvas>
      <StatusBar>
        <StatusCell $fill />
        {["T=-39.874", "p=51.981", "h=259.12", "v=0.35473", "s=1.271", "x=0.489"].map((t) => (
          <StatusCell key={t}>{t}</StatusCell>
        ))}
      </StatusBar>
      <TaskBar>
        <Task aria-label="Start" $w={48}>
          <Svg s={16}><path d="M0 2.5L6.5 1.5V7.5H0zM7.5 1.400L16 0V7.5H7.5zM0 8.5H6.5V14.5L0 13.5zM7.5 8.5H16V16L7.5 14.700z" fill="#000" /></Svg>
        </Task>
        <SearchBox>
          <Svg s={17}><circle cx="11" cy="6" r="5" stroke="#222" strokeWidth="1.300" /><path d="M7.5 9.5L1 16" stroke="#222" strokeWidth="1.300" /></Svg>
          <SearchInput aria-label="Search" placeholder="Type here to search" />
        </SearchBox>
        <Task aria-label="Cortana"><Svg s={18}><circle cx="9" cy="9" r="6.500" stroke="#000" strokeWidth="2" /></Svg></Task>
        <Task aria-label="Task view">
          <Svg s={18}><path d="M1.5 5.5h10v7h-10zM1.5 1v2.500h10V1M1.5 17v-2.500h10V17M15.5 1v3M15.5 9v8" stroke="#000" strokeWidth="1.200" /><path d="M14 5h3v3h-3z" fill="#000" /></Svg>
        </Task>
        {TASKS.map((t) => (
          <AppTask key={t.name} aria-label={t.name} $run={t.run} $stack={t.stack}><Svg>{t.icon}</Svg></AppTask>
        ))}
        <AppTask aria-label="Refrigeration utilities" $active><AppIcon size={24} /></AppTask>
        <Spacer />
        <Task $w={24} aria-label="Hidden icons"><Svg s={14}><path d="M1 10L7 4L13 10" stroke="#222" strokeWidth="1.400" /></Svg></Task>
        <Task $w={25} aria-label="OneDrive">
          <Svg s={17}><path d="M4 12a3.500 3.500 0 0 1 0-7 5 5 0 0 1 9 0 4 4 0 0 1 2 5" fill="#8f8f8f" stroke="#333" /><circle cx="11.5" cy="11.5" r="5" fill="#1a7fd4" /><path d="M9 11a2.500 2.500 0 0 1 5-1M14 12a2.500 2.500 0 0 1-5 1" stroke="#fff" /></Svg>
        </Task>
        <Task $w={23} aria-label="Network">
          <Svg s={14}><path d="M1 13A12 12 0 0 1 13 1M4 13a9 9 0 0 1 9-8.500M7 13a6 6 0 0 1 6-5.500M10 13a3 3 0 0 1 3-2.500" stroke="#333" strokeWidth="1.200" /></Svg>
        </Task>
        <Task $w={22} aria-label="Volume">
          <Svg s={16}><path d="M1 6h2l4-4v12l-4-4H1z" stroke="#222" /><path d="M9 6q1.500 2 0 4" stroke="#222" /><path d="M11.5 4.500q3 3.500 0 7" stroke="#666" /><path d="M14 3q3 5 0 10" stroke="#999" /></Svg>
        </Task>
        <Lang>POR</Lang>
        <Clock>{"8:42 PM\n5/7/2021"}</Clock>
        <Task $w={42} aria-label="Notifications">
          <Svg s={18}><path d="M1.5 2.5h15v11H11.5L9 16L7 13.5H1.500z" stroke="#111" strokeWidth="1.200" /></Svg>
        </Task>
        <Task $w={12} aria-label="Show desktop"><Svg s={4}><path d="M2.5 0V4" stroke="#b8bfc9" /></Svg></Task>
      </TaskBar>
    </Page>
  );
}
